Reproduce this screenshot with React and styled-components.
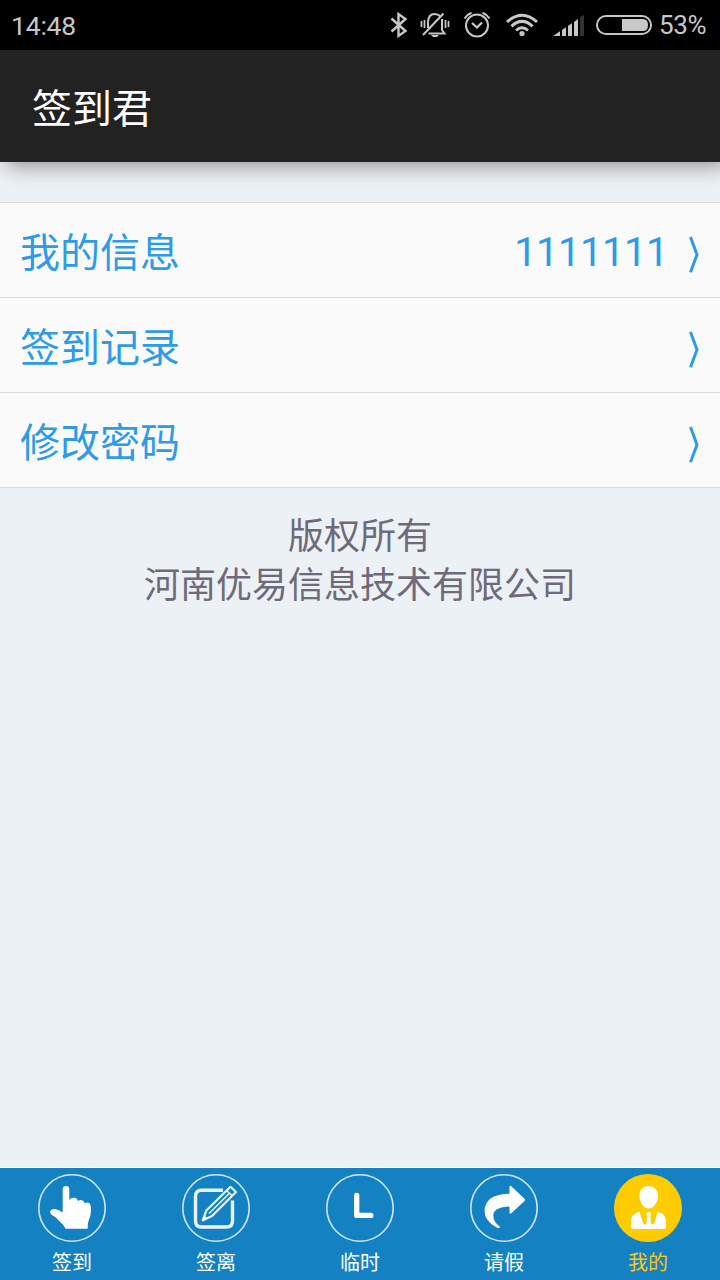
import React from "react";
import styled, { createGlobalStyle } from "styled-components";

const Global = createGlobalStyle`
  * { box-sizing: border-box; }
  body {
    margin: 0;
    background: #ecf1f5;
    font-family: Roboto, "Noto Sans CJK SC", sans-serif;
  }
`;

const Screen = styled.div`
  display: flex;
  flex-direction: column;
  width: 720px;
  height: 1280px;
  overflow: hidden;
  background: #ecf1f5;
`;

const StatusBar = styled.div`
  display: flex;
  flex: none;
  align-items: center;
  justify-content: space-between;
  height: 50px;
  padding: 0 11px 0 11px;
  background: #000;
  color: #c8c8c8;
  font-size: 26px;
  line-height: 50px;
`;

const Clock = styled.span`
  padding-top: 2px;
  font-size: 26.5px;
  letter-spacing: -0.2px;
`;

const StatusIcons = styled.div`
  display: flex;
  align-items: center;
  svg { display: block; }
  svg:nth-of-type(2) { margin-left: 11px; }
  svg:nth-of-type(3) { margin-left: 13px; }
  svg:nth-of-type(4) { margin-left: 14px; }
  svg:nth-of-type(5) { margin-left: 14px; }
  svg:nth-of-type(6) { margin-left: 11px; }
`;

const Battery = styled.span`
  width: 50px;
  margin-left: 7px;
  font-size: 26px;
  letter-spacing: -0.3px;
`;

const Header = styled.header`
  flex: none;
  height: 112px;
  padding: 4px 0 0 32px;
  background: #222;
  color: #fff;
  font-size: 40px;
  line-height: 112px;
  box-shadow: 6px 4px 20px rgba(0, 0, 0, 0.4);
`;

const Content = styled.main`
  flex: 1;
  padding-top: 40px;
  border-bottom: 1px solid #fff;
`;

const List = styled.div`
  border-top: 1px solid #d9dbdd;
`;

const Row = styled.div`
  display: flex;
  align-items: center;
  height: 95px;
  padding: 8px 20px 0;
  background: #fafafa;
  border-bottom: 1px solid #d9dbdd;
  color: #2e9ae8;
  font-size: 40px;
  line-height: 86px;
`;

const Label = styled.span`
  flex: 1;
`;

const Value = styled.span`
  margin-right: 21px;
  padding-bottom: 2px;
  font-size: 40px;
  letter-spacing: -0.5px;
`;

const Copyright = styled.p`
  margin: 25px 0 0;
  color: #6f6a79;
  font-size: 36px;
  line-height: 49px;
  text-align: center;
`;

const TabBar = styled.nav`
  display: grid;
  flex: none;
  grid-template-columns: repeat(5, 1fr);
  height: 112px;
  padding-top: 6px;
  background: #1482c2;
`;

const Tab = styled.div`
  display: flex;
  flex-direction: column;
  align-items: center;
  color: ${(p) => (p.$active ? "#fdc80a" : "#fff")};
  font-size: 20px;
  line-height: 42px;
`;

const TabIcon = styled.svg`
  display: block;
  width: 68px;
  height: 68px;
`;

const Chevron = () => (
  <svg width="11" height="38" viewBox="0 0 11 38" fill="none">
    <path d="M1.500 2L8 19.700L1.500 37.300" stroke="#2e9ae8" strokeWidth="3" />
  </svg>
);

const BluetoothIcon = () => (
  <svg width="20" height="30" viewBox="0 0 20 30" fill="none" stroke="#c8c8c8" strokeWidth="2.400">
    <path d="M2.500 8.500L16.500 21L9.500 26V4L16.500 9L2.500 21.500" />
  </svg>
);

const MutedBellIcon = () => (
  <svg width="30" height="30" viewBox="0 0 30 30" fill="none" stroke="#c8c8c8" strokeWidth="2">
    <path d="M1.500 11v6M4.500 10v8M25.500 10v8M28.500 11v6" strokeWidth="1.700" />
    <path d="M8 18V12Q8.500 4 14.500 4Q18 4 20.500 6.500M22 9V20L24.500 23.500H8.500M3 25L23.500 3.500" />
    <path d="M11 25h8l-2 2h-4z" fill="#c8c8c8" stroke="none" />
  </svg>
);

const AlarmIcon = () => (
  <svg width="28" height="30" viewBox="0 0 28 30" fill="none" stroke="#c8c8c8" strokeWidth="2">
    <circle cx="14" cy="15.500" r="11" />
    <path d="M1.500 8.500Q4 4.500 8.500 2.700M26.500 8.500Q24 4.500 19.500 2.700" />
    <path d="M9 13L14 17.500L19 12.500" strokeWidth="2.300" />
  </svg>
);

const WifiIcon = () => (
  <svg width="34" height="30" viewBox="0 0 34 30" fill="none" stroke="#c8c8c8" strokeWidth="3">
    <path d="M2 12Q17 -1.500 32 12M6.500 16.300Q17 6.500 27.500 16.300M11 20.500Q17 15 23 20.500" />
    <circle cx="17" cy="23.500" r="2.600" fill="#c8c8c8" stroke="none" />
  </svg>
);

const SignalIcon = () => (
  <svg width="32" height="30" viewBox="0 0 32 30" fill="#c8c8c8">
    <path d="M0 26L7 21.300V26ZM9 20L13 17.300V26H9ZM15 16L19 13.300V26H15ZM21 12L25 9V26H21Z" />
    <path d="M27 7L31 5V26H27Z" fill="#333" />
  </svg>
);

const BatteryIcon = () => (
  <svg width="56" height="30" viewBox="0 0 56 30">
    <rect x="1" y="6" width="54" height="18" rx="9" fill="none" stroke="#c8c8c8" strokeWidth="2" />
    <path d="M26 9H47Q52 9 52 15Q52 21 47 21H26Z" fill="#c8c8c8" />
  </svg>
);

const HandGlyph = () => (
  <path
    fill="#fff"
    d="M24.700 38.500V15.300Q24.700 12 28 12Q31.300 12 31.300 15.300V26Q33 23.500 36 23.700Q39 23.800 40 27Q42 25.600 44 26.200Q46 26.800 46.800 29.300Q49.500 27.700 51.500 29.200Q53 31 53 36Q53 42 50.800 46Q49.500 49 49.700 54.700H27.500Q25.500 50.500 21.500 47.300Q18 42.500 14.300 41.200Q11.500 39.500 12.300 37Q13.500 34.700 17 35Q20.500 35.500 24.700 38.500Z"
  />
);

const PencilGlyph = () => (
  <g fill="none" stroke="#e9f4fa">
    <path d="M41 16.300H19.500Q13.500 16.300 13.500 22.300V47Q13.500 53 19.500 53H44.500Q50.500 53 50.500 47V26.500" strokeWidth="3.400" />
    <path d="M20.800 46.300L24.300 36.500L48.500 12.800L54 18L30 42Z" strokeWidth="2.200" strokeLinejoin="round" />
    <path d="M44.500 16.500L50.500 22M27 39.500L47.500 19.200" strokeWidth="1.500" />
    <path d="M20 47L22 41.500L26 44.500Z" fill="#fff" stroke="none" />
  </g>
);

const ClockGlyph = () => (
  <path d="M30.700 21.300V41.400H44.800" fill="none" stroke="#fff" strokeWidth="5.300" strokeLinecap="round" strokeLinejoin="round" />
);

const ShareGlyph = () => (
  <path
    fill="#fff"
    d="M39.500 12.500Q40 11.300 41.300 12.300L54.500 24.800Q55.500 26 54.500 27L41.300 39.300Q39.500 40.500 39.500 38.500V32.500Q24 33 23.300 41Q23 48 29.700 52.500Q30 54.500 27.500 54Q14.500 47.500 14.500 36.500Q15.500 20 39.500 19.700Z"
  />
);

const PersonGlyph = () => (
  <g fill="#fff">
    <path d="M34.700 12C40.500 12 44 16.500 44 22C44 28 39.500 34.500 34.700 34.500C29.800 34.500 25.300 28 25.300 22C25.300 16.500 29 12 34.700 12Z" />
    <path d="M25.500 37.700L29.300 49.500Q30 50.500 31 50.500Q32.200 50.500 32.500 49L33 42L32.300 39.500L34.700 37.500L37.100 39.500L36.400 42L36.900 49Q37.200 50.500 38.400 50.500Q39.400 50.500 40.100 49.500L43.800 37.700Q52 40.500 52 46V52.500Q52 55 49.500 55H19.500Q17 55 17 52.500V46Q17 40.500 25.500 37.700Z" />
  </g>
);

const rows = [
  { label: "我的信息", value: "1111111" },
  { label: "签到记录" },
  { label: "修改密码" },
];

const tabs = [
  { label: "签到", Glyph: HandGlyph },
  { label: "签离", Glyph: PencilGlyph },
  { label: "临时", Glyph: ClockGlyph },
  { label: "请假", Glyph: ShareGlyph },
  { label: "我的", Glyph: PersonGlyph, active: true },
];

export default function App() {
  return (
    <Screen>
      <Global />
      <StatusBar>
        <Clock>14:48</Clock>
        <StatusIcons>
          <BluetoothIcon />
          <MutedBellIcon />
          <AlarmIcon />
          <WifiIcon />
          <SignalIcon />
          <BatteryIcon />
          <Battery>53%</Battery>
        </StatusIcons>
      </StatusBar>
      <Header>签到君</Header>
      <Content>
        <List>
          {rows.map((row) => (
            <Row key={row.label}>
              <Label>{row.label}</Label>
              {row.value && <Value>{row.value}</Value>}
              <Chevron />
            </Row>
          ))}
        </List>
        <Copyright>
          版权所有
          <br />
          河南优易信息技术有限公司
        </Copyright>
      </Content>
      <TabBar>
        {tabs.map(({ label, Glyph, active }) => (
          <Tab key={label} $active={active}>
            <TabIcon viewBox="0 0 68 68">
              {active ? (
                <circle cx="34" cy="34" r="34" fill="#ffcc00" />
              ) : (
                <circle cx="34" cy="34" r="33.200" fill="none" stroke="#cfe5f2" strokeWidth="1.600" />
              )}
              <Glyph />
            </TabIcon>
            {label}
          </Tab>
        ))}
      </TabBar>
    </Screen>
  );
}
